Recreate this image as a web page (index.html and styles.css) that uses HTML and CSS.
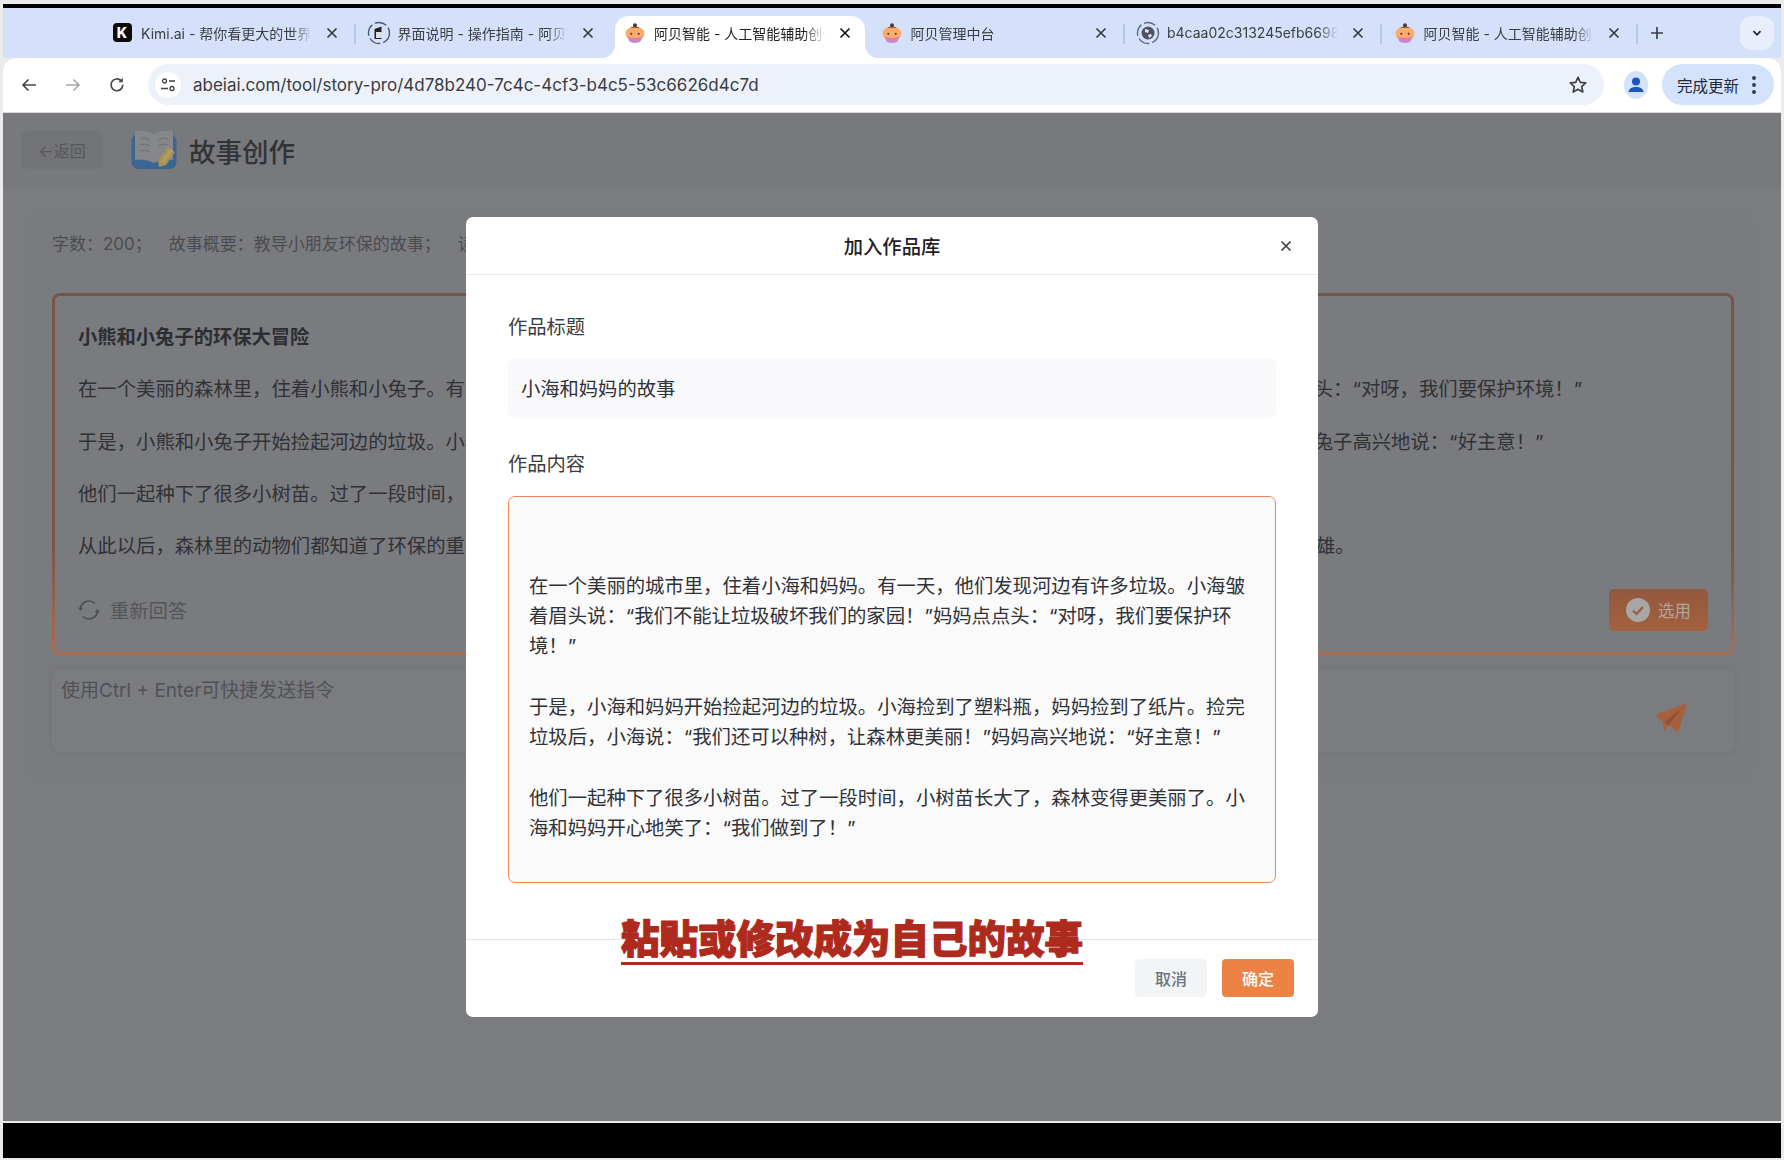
FILE: index.html
```html
<!DOCTYPE html>
<html lang="zh-CN">
<head>
<meta charset="utf-8">
<title>阿贝智能 - 故事创作</title>
<link rel="stylesheet" href="styles.css">
</head>
<body>
<svg class="defs" width="0" height="0" aria-hidden="true">
  <symbol id="baby" viewBox="0 0 20 20">
    <ellipse cx="10" cy="16.500" rx="6.500" ry="3.500" fill="#b98be0"/>
    <ellipse cx="10" cy="10.500" rx="9.500" ry="7" fill="#f7ae6c"/>
    <path d="M1.500 13c2.500 2.500 14.500 2.500 17 0-1.500 3-5 4.800-8.500 4.800S3 16 1.500 13z" fill="#ec76a4"/>
    <path d="M5.500 5c1.500-2 7.500-2 9 0-3-.8-6-.8-9 0z" fill="#5a4030"/>
    <circle cx="10" cy="2.300" r="2" fill="#4b3a30"/>
    <circle cx="6.300" cy="10.800" r="1.100" fill="#7a3526"/>
    <circle cx="13.700" cy="10.800" r="1.100" fill="#7a3526"/>
  </symbol>
  <symbol id="close" viewBox="0 0 12 12">
    <path d="M1.500 1.500l9 9M10.500 1.500l-9 9" fill="none" stroke="currentColor" stroke-width="1.600"/>
  </symbol>
</svg>

<div class="screen">
  <div class="topbar"></div>

  <div class="strip">
    <div class="tab sep">
      <span class="fav"><span class="kimi">K</span></span>
      <span class="tab-title">Kimi.ai - 帮你看更大的世界</span>
      <svg class="tab-x"><use href="#close"/></svg>
    </div>
    <div class="tab">
      <span class="fav">
        <svg width="24" height="24" viewBox="0 0 24 24"><circle cx="12" cy="12" r="10.500" fill="none" stroke="#4a5a70" stroke-width="1.400" stroke-dasharray="12 3"/><path d="M7.500 8l7-2.500V18h-7z" fill="#222"/><rect x="9" y="11" width="6" height="6" fill="#ddd"/></svg>
      </span>
      <span class="tab-title">界面说明 - 操作指南 - 阿贝智能</span>
      <svg class="tab-x"><use href="#close"/></svg>
    </div>
    <div class="tab active">
      <span class="fav"><svg width="20" height="20"><use href="#baby"/></svg></span>
      <span class="tab-title">阿贝智能 - 人工智能辅助创作</span>
      <svg class="tab-x"><use href="#close"/></svg>
    </div>
    <div class="tab sep">
      <span class="fav"><svg width="20" height="20"><use href="#baby"/></svg></span>
      <span class="tab-title">阿贝管理中台</span>
      <svg class="tab-x"><use href="#close"/></svg>
    </div>
    <div class="tab sep">
      <span class="fav">
        <svg width="24" height="24" viewBox="0 0 24 24"><circle cx="12" cy="12" r="10.500" fill="none" stroke="#5a6a80" stroke-width="1.400" stroke-dasharray="12 3"/><circle cx="12" cy="12" r="6.500" fill="#4f5560"/><path d="M9 8l4 1-1 3-3-1zM12 14l3-1 1 2-3 2z" fill="#dfe6f5"/></svg>
      </span>
      <span class="tab-title">b4caa02c313245efb6698c1d</span>
      <svg class="tab-x"><use href="#close"/></svg>
    </div>
    <div class="tab sep">
      <span class="fav"><svg width="20" height="20"><use href="#baby"/></svg></span>
      <span class="tab-title">阿贝智能 - 人工智能辅助创作</span>
      <svg class="tab-x"><use href="#close"/></svg>
    </div>
    <svg class="plus" viewBox="0 0 14 14"><path d="M7 1v12M1 7h12" stroke="#3c4043" stroke-width="1.700" fill="none"/></svg>
    <div class="tab-menu">
      <svg width="12" height="12" viewBox="0 0 12 12"><path d="M2.500 4.200L6 7.800l3.500-3.600" fill="none" stroke="#1f2937" stroke-width="1.800"/></svg>
    </div>
  </div>

  <div class="toolbar">
    <svg class="nav" viewBox="0 0 18 18"><path d="M16 9H3M8.500 3.500L3 9l5.500 5.500" fill="none" stroke="#45484d" stroke-width="1.700"/></svg>
    <svg class="nav" viewBox="0 0 18 18"><path d="M2 9h13M9.500 3.500L15 9l-5.500 5.500" fill="none" stroke="#a2a5aa" stroke-width="1.500"/></svg>
    <svg class="nav" viewBox="0 0 18 18"><path d="M14.800 8.800a5.900 5.900 0 1 1-1.700-4.100" fill="none" stroke="#45484d" stroke-width="1.700"/><path d="M14.800 1.800v4.400h-4.400z" fill="#45484d"/></svg>
    <div class="omnibox">
      <span class="site-info">
        <svg width="16" height="16" viewBox="0 0 16 16"><circle cx="4.500" cy="4" r="2" fill="none" stroke="#3c4043" stroke-width="1.300"/><path d="M9 4h6M1 11.500h7" stroke="#3c4043" stroke-width="1.500"/><circle cx="12" cy="11.500" r="2" fill="none" stroke="#3c4043" stroke-width="1.300"/></svg>
      </span>
      <span class="url">abeiai.com/tool/story-pro/4d78b240-7c4c-4cf3-b4c5-53c6626d4c7d</span>
      <svg class="star" viewBox="0 0 20 20"><path d="M10 2.300l2.300 5 5.400.6-4 3.700 1.100 5.400-4.800-2.700L5.200 17l1.100-5.400-4-3.700 5.400-.6z" fill="none" stroke="#3c4043" stroke-width="1.700" stroke-linejoin="round"/></svg>
    </div>
    <span class="avatar">
      <svg width="24" height="28" viewBox="0 0 24 28"><ellipse cx="12" cy="14" rx="12" ry="14" fill="#d3e3fd"/><circle cx="12" cy="10.500" r="4" fill="#1f55c0"/><path d="M4.500 21c.5-4 4-5 7.500-5s7 1 7.500 5z" fill="#1f55c0"/></svg>
    </span>
    <div class="update">
      <span>完成更新</span>
      <svg width="6" height="20" viewBox="0 0 6 20"><circle cx="3" cy="3" r="2" fill="#3c4043"/><circle cx="3" cy="10" r="2" fill="#3c4043"/><circle cx="3" cy="17" r="2" fill="#3c4043"/></svg>
    </div>
  </div>

  <main class="page">
    <header class="head">
      <button class="back">←返回</button>
      <svg class="book" viewBox="0 0 46 40">
        <rect x="0.500" y="4" width="45" height="35" rx="7" fill="#3d6594"/>
        <path d="M4 1c7-1 14 0 19 3 5-3 12-4 19-3v29c-7-1-14 0-19 3-5-3-12-4-19-3z" fill="#85878a"/>
        <path d="M9 9c3-1 7-1 10 1M9 15c3-1 7-1 10 1M9 21c3-1 7-1 10 1M27 10c3-2 7-2 10-1M27 16c3-2 7-2 10-1" fill="none" stroke="#74767a" stroke-width="1.300"/>
        <path d="M37 17l7 5-9 13-7 2-1-7z" fill="#a8905a"/>
        <path d="M39 18.500l3 2-9 13-3-2z" fill="#b59d5e"/>
      </svg>
      <h1 class="page-title">故事创作</h1>
    </header>

    <section class="panel">
      <p class="meta"><span>字数：200；</span><span>故事概要：教导小朋友环保的故事；</span><span>读者对象：小朋友；</span></p>

      <article class="card">
        <h2 class="card-title">小熊和小兔子的环保大冒险</h2>
        <p class="card-line">在一个美丽的森林里，住着小熊和小兔子。有一天，他们发现河边有许多垃圾。小熊皱着眉头说：“我们不能让垃圾破坏我们的家园！”小兔子点点头：“对呀，我们要保护环境！”</p>
        <p class="card-line">于是，小熊和小兔子开始捡起河边的垃圾。小熊捡到了塑料瓶，小兔子捡到了纸片。捡完垃圾后，小熊说：“我们还可以种树，让森林更美丽！”小兔子高兴地说：“好主意！”</p>
        <p class="card-line">他们一起种下了很多小树苗。过了一段时间，小树苗长大了，森林变得更美丽了。</p>
        <p class="card-line">从此以后，森林里的动物们都知道了环保的重要性，大家也都向小熊和小兔子学习，一起爱护家园。小熊和小兔子也成为了森林里真正的环保小英雄。</p>
        <div class="card-foot">
          <span class="retry">
            <svg width="22" height="22" viewBox="0 0 22 22"><path d="M2.500 9A8.700 8.700 0 0 1 17 4.500M19.500 13A8.700 8.700 0 0 1 5 17.500" fill="none" stroke="#4c4d52" stroke-width="1.600"/><path d="M0 8.500l5 .5-2.500 3zM22 13.500l-5-.5 2.500-3z" fill="#4c4d52"/></svg>
            <span>重新回答</span>
          </span>
          <button class="choose">
            <svg width="24" height="24" viewBox="0 0 24 24"><circle cx="12" cy="12" r="12" fill="#a9a7a6"/><path d="M7 12.500l3.500 3.500L17 9" fill="none" stroke="#9a5c3f" stroke-width="2.200"/></svg>
            <span>选用</span>
          </button>
        </div>
      </article>

      <div class="prompt">
        <span class="placeholder">使用Ctrl + Enter可快捷发送指令</span>
        <svg class="send" viewBox="0 0 32 30"><path d="M32 0L23 30l-9-8-5 6-1-9L0 12z" fill="#a8603c"/><path d="M9 19L26 6 14 22z" fill="#8e5238"/></svg>
      </div>
    </section>

    <div class="overlay">
      <div class="modal">
        <div class="modal-head">
          <h3 class="modal-title">加入作品库</h3>
          <svg class="modal-x"><use href="#close"/></svg>
        </div>
        <div class="modal-body">
          <label class="field-label">作品标题</label>
          <div class="input">小海和妈妈的故事</div>
          <label class="field-label second">作品内容</label>
          <div class="textarea">

在一个美丽的城市里，住着小海和妈妈。有一天，他们发现河边有许多垃圾。小海皱着眉头说：“我们不能让垃圾破坏我们的家园！”妈妈点点头：“对呀，我们要保护环境！”

于是，小海和妈妈开始捡起河边的垃圾。小海捡到了塑料瓶，妈妈捡到了纸片。捡完垃圾后，小海说：“我们还可以种树，让森林更美丽！”妈妈高兴地说：“好主意！”

他们一起种下了很多小树苗。过了一段时间，小树苗长大了，森林变得更美丽了。小海和妈妈开心地笑了：“我们做到了！”</div>
        </div>
        <div class="modal-foot">
          <button class="btn cancel">取消</button>
          <button class="btn ok">确定</button>
        </div>
        <div class="note">粘贴或修改成为自己的故事</div>
      </div>
    </div>
  </main>

  <div class="bottombar"></div>
</div>
</body>
</html>
```

FILE: styles.css
```css
* { box-sizing: border-box; }
html, body { margin: 0; padding: 0; }
body {
  width: 1784px;
  height: 1160px;
  overflow: hidden;
  font-family: Inter, "Noto Sans CJK SC", sans-serif;
  background: #f2f2f2;
  color: #1f2023;
}
.defs { position: absolute; }
h1, h2, h3, p { margin: 0; font: inherit; }
button { font: inherit; border: 0; padding: 0; }

.screen {
  height: 1160px;
  padding: 4px 3px 2px;
  display: flex;
  flex-direction: column;
  background: #ebebeb;
}
.topbar { height: 4px; background: #000; flex: none; }
.bottombar { height: 35px; background: #000; flex: none; margin-top: 2px; }

/* tab strip */
.strip {
  height: 50px;
  flex: none;
  display: flex;
  align-items: flex-start;
  padding: 8px 7px 0 97px;
  background: #d5e1fa;
}
.tab {
  position: relative;
  width: 256.500px;
  height: 42px;
  flex: none;
  display: flex;
  align-items: center;
  padding: 0 19px 9px 10px;
  font-size: 14px;
  color: #3c4043;
}
.tab.sep::after {
  content: "";
  position: absolute;
  right: 1px;
  top: 8px;
  width: 2px;
  height: 20px;
  background: #b2c8ec;
}
.tab.active {
  margin: 0 5px 0 2px;
  width: 249.500px;
  padding-left: 8px;
  padding-right: 14px;
  background: #fff;
  border-radius: 14px 14px 0 0;
  color: #1f2023;
}
.tab.active::before,
.tab.active::after {
  content: "";
  position: absolute;
  bottom: 0;
  width: 14px;
  height: 14px;
}
.tab.active::before { left: -14px; background: radial-gradient(circle at 0 0, transparent 14px, #fff 14.500px); }
.tab.active::after { right: -14px; background: radial-gradient(circle at 100% 0, transparent 14px, #fff 14.500px); }
.fav { width: 24px; height: 24px; flex: none; display: flex; align-items: center; justify-content: center; margin-right: 7px; }
.kimi {
  width: 19px;
  height: 19px;
  border-radius: 4px;
  background: #0c0c0c;
  color: #fff;
  font-size: 14px;
  font-weight: 800;
  line-height: 19px;
  text-align: center;
}
.tab-title {
  flex: 1;
  min-width: 0;
  white-space: nowrap;
  overflow: hidden;
  margin-right: 14px;
  -webkit-mask-image: linear-gradient(90deg, #000 88%, transparent 100%);
  mask-image: linear-gradient(90deg, #000 88%, transparent 100%);
}
.tab-x { width: 12px; height: 12px; flex: none; color: #33363a; }
.tab.active .tab-x { color: #111; }
.plus { width: 14px; height: 14px; flex: none; margin: 10px 0 0 11px; }
.tab-menu {
  margin-left: auto;
  width: 34px;
  height: 34px;
  border-radius: 12px;
  background: #e8eefb;
  display: flex;
  align-items: center;
  justify-content: center;
}

/* toolbar */
.toolbar {
  height: 55px;
  flex: none;
  display: flex;
  align-items: center;
  padding: 0 7px 1px 17px;
  background: #fff;
  border-radius: 14px 14px 0 0;
  border-bottom: 1px solid #d9d9d9;
}
.nav { width: 18px; height: 18px; flex: none; margin-right: 26px; }
.nav:nth-of-type(3) { margin-right: 22px; }
.omnibox {
  flex: none;
  width: 1456px;
  height: 41px;
  border-radius: 21px;
  background: #edf2fa;
  display: flex;
  align-items: center;
  padding: 0 16px 0 7px;
}
.site-info {
  width: 26px;
  height: 26px;
  border-radius: 50%;
  background: #fff;
  display: flex;
  align-items: center;
  justify-content: center;
  flex: none;
}
.url { margin-left: 12px; font-size: 17px; color: #3a3c40; white-space: nowrap; }
.star { width: 20px; height: 20px; margin-left: auto; flex: none; }
.avatar { margin-left: 20px; width: 24px; height: 28px; flex: none; }
.update {
  margin-left: 14px;
  width: 112px;
  height: 41px;
  border-radius: 21px;
  background: #d3e3fd;
  display: flex;
  align-items: center;
  padding-left: 15px;
  font-size: 15.500px;
  color: #1f2937;
  flex: none;
}
.update svg { margin-left: 12px; }

/* dimmed page */
.page {
  position: relative;
  flex: 1;
  min-height: 0;
  background: #7b7c80;
}
.head {
  height: 74px;
  display: flex;
  align-items: center;
  padding: 0 0 0 18px;
  background: #78797d;
}
.back {
  width: 82px;
  height: 38px;
  border-radius: 6px;
  background: #737478;
  color: #55565b;
  font-size: 16px;
}
.book { width: 46px; height: 40px; margin-left: 28px; flex: none; }
.page-title { margin-left: 12px; font-size: 26.500px; color: #323337; font-weight: 500; }

.panel {
  margin: 25px 26px 0 25px;
  padding: 22px 21px 28px 24px;
  background: #7a7b7f;
  border-radius: 10px;
}
.meta {
  height: 20px;
  line-height: 20px;
  font-size: 17px;
  color: #4b4c50;
  margin-bottom: 39px;
  white-space: nowrap;
  display: flex;
  gap: 17px;
}
.card {
  height: 362px;
  padding: 15px 23px 21px;
  border: 3px solid transparent;
  border-radius: 8px;
  background:
    linear-gradient(#7a7b7f, #7a7b7f) padding-box,
    linear-gradient(180deg, #775446 0%, #7c5548 70%, #a96f52 100%) border-box;
}
.card-title, .card-line { font-size: 19.350px; line-height: 52.300px; white-space: nowrap; }
.card-title { font-weight: 700; color: #2c2d31; font-size: 19.300px; }
.card-line { color: #303135; }
.card-foot {
  margin-top: 17px;
  display: flex;
  align-items: center;
  justify-content: space-between;
}
.retry { display: flex; align-items: center; gap: 10px; color: #54555a; font-size: 19.300px; }
.choose {
  width: 99px;
  height: 42px;
  border-radius: 5px;
  background: linear-gradient(180deg, #93583d, #a3613f);
  display: flex;
  align-items: center;
  justify-content: center;
  gap: 8px;
  color: #b3a49c;
  font-size: 16.500px;
}
.prompt {
  margin-top: 14px;
  height: 83px;
  padding: 8px 47px 0 9px;
  border-radius: 8px;
  background: #7b7c80;
  box-shadow: 0 0 6px #707175;
  display: flex;
  justify-content: space-between;
  align-items: flex-start;
}
.placeholder { font-size: 19px; line-height: 28px; color: #505156; white-space: nowrap; }
.send { width: 32px; height: 30px; margin-top: 26px; flex: none; }

/* modal */
.overlay {
  position: absolute;
  inset: 0;
  display: flex;
  align-items: center;
  justify-content: center;
}
.modal {
  position: relative;
  width: 852px;
  height: 800px;
  background: #fff;
  border-radius: 7px;
  display: flex;
  flex-direction: column;
}
.modal-head {
  height: 58px;
  flex: none;
  position: relative;
  display: flex;
  align-items: center;
  justify-content: center;
  border-bottom: 1px solid #e6e7ea;
}
.modal-title { font-size: 19.300px; font-weight: 500; color: #1f2126; }
.modal-x { position: absolute; right: 26px; top: 23px; width: 12px; height: 12px; color: #3b3d42; }
.modal-body { flex: 1; padding: 40px 42px 0; }
.field-label { display: block; font-size: 19.300px; line-height: 24px; color: #3a3c41; }
.field-label.second { margin-top: 34px; }
.input {
  margin-top: 20px;
  height: 59px;
  padding: 0 13px;
  line-height: 60px;
  border-radius: 7px;
  background: #f9f9fb;
  font-size: 19.300px;
  color: #303238;
}
.textarea {
  margin-top: 20px;
  height: 387px;
  padding: 13px 28px 13px 20px;
  border: 1px solid #e98a56;
  border-radius: 7px;
  background: #fafafb;
  font-size: 19.350px;
  line-height: 30.300px;
  color: #303238;
  white-space: pre-wrap;
}
.modal-foot {
  flex: none;
  height: 78px;
  padding: 19px 24px 0 0;
  display: flex;
  justify-content: flex-end;
  gap: 15px;
  border-top: 1px solid #e6e7ea;
}
.btn {
  width: 72px;
  height: 38px;
  border-radius: 4px;
  font-size: 16px;
  font-weight: 500;
}
.cancel { background: #f3f4f6; color: #6b7280; }
.ok { background: #ec8345; color: #fff; }
.note {
  position: absolute;
  left: 155px;
  top: 700px;
  font-size: 38.500px;
  line-height: 45px;
  font-weight: 900;
  color: #ae2a1c;
  -webkit-text-stroke: 1.200px #ae2a1c;
  white-space: nowrap;
  border-bottom: 3px solid #ae2a1c;
}
```
